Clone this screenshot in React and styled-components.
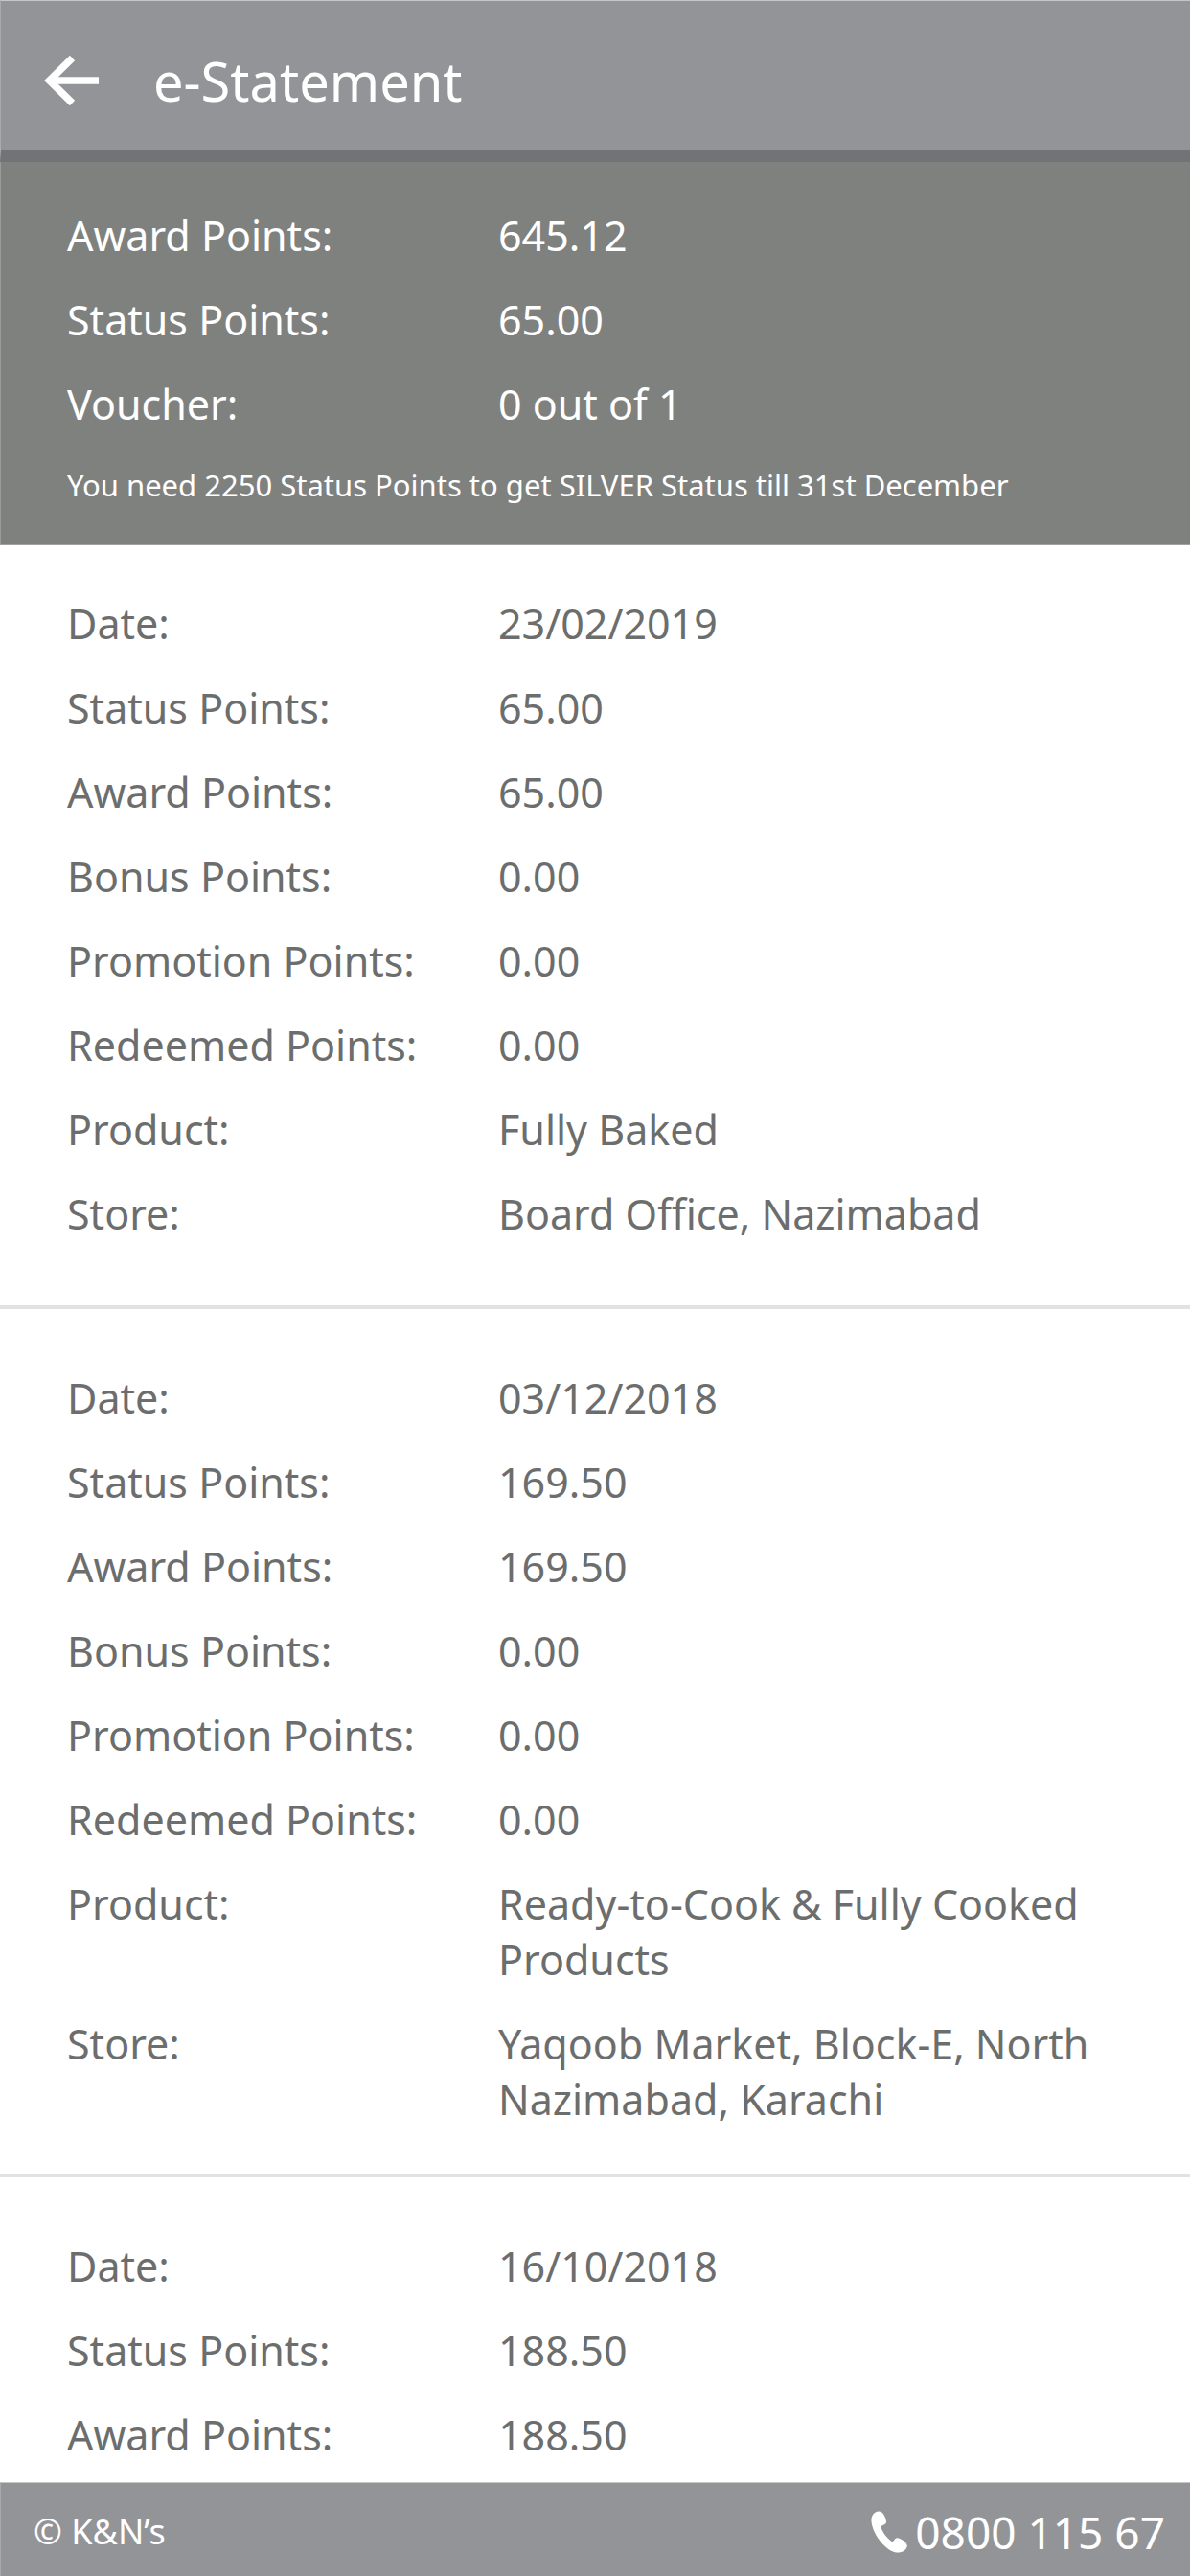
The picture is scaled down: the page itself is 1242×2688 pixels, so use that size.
import styled, { createGlobalStyle } from "styled-components";

const GlobalStyle = createGlobalStyle`
  *, *::before, *::after {
    box-sizing: border-box;
  }

  body {
    margin: 0;
    background-color: #fff;
    font-family: "Noto Sans", "Open Sans", sans-serif;
  }
`;

const Page = styled.div`
  display: flex;
  flex-direction: column;
  min-height: 100vh;
  color: #6c6d6d;
`;

const Header = styled.header`
  display: flex;
  align-items: center;
  gap: 56px;
  height: 169px;
  padding: 10px 45px 0;
  background-color: #939498;
  border-top: 1px solid #c5c6c8;
  border-left: 1px solid #a9aaad;
  border-bottom: 12px solid #727377;
  color: #fff;
`;

const BackButton = styled.button`
  display: flex;
  padding: 0;
  border: none;
  background: none;
  color: inherit;
  cursor: pointer;

  svg {
    width: 58px;
    height: 54px;
  }
`;

const Title = styled.h1`
  margin: 0;
  font-size: 56px;
  line-height: 76px;
  font-weight: 400;
`;

const Summary = styled.section`
  padding: 48px 70px 40px 69px;
  background-color: #7f817f;
  border-left: 1px solid #999a99;
  border-bottom: 1px solid #a0a1a0;
  color: #fff;
`;

const Notice = styled.p`
  margin: 33px 0 0;
  font-size: 31px;
  line-height: 44px;
`;

const Details = styled.dl`
  display: flex;
  flex-direction: column;
  gap: 30px;
  margin: 0;
  font-size: 43px;
  line-height: 58px;
`;

const DetailRow = styled.div`
  display: grid;
  grid-template-columns: 450px 1fr;

  dt,
  dd {
    margin: 0;
  }
`;

const Statements = styled.main`
  flex: 1;
`;

const Entry = styled.article`
  padding: 64px 70px ${props => (props.$compact ? "48px" : "66px")};
  border-bottom: 4px solid #e1e3e2;

  &:first-child {
    padding-top: 53px;
  }

  &:last-child {
    padding-bottom: 0;
    border-bottom: none;
  }
`;

const Footer = styled.footer`
  display: flex;
  align-items: center;
  justify-content: space-between;
  height: 98px;
  padding: 4px 26px 0 34px;
  background-color: #939498;
  border-top: 1px solid #c5c6c8;
  border-left: 1px solid #a9aaad;
  color: #fff;
`;

const Copyright = styled.span`
  font-size: 36px;
  line-height: 52px;
`;

const PhoneLink = styled.a`
  display: flex;
  align-items: center;
  gap: 8px;
  color: inherit;
  font-size: 46px;
  line-height: 60px;
  text-decoration: none;

  svg {
    width: 38px;
    height: 44px;
  }
`;

const summary = [
  ["Award Points:", "645.12"],
  ["Status Points:", "65.00"],
  ["Voucher:", "0 out of 1"],
];

const statements = [
  {
    rows: [
      ["Date:", "23/02/2019"],
      ["Status Points:", "65.00"],
      ["Award Points:", "65.00"],
      ["Bonus Points:", "0.00"],
      ["Promotion Points:", "0.00"],
      ["Redeemed Points:", "0.00"],
      ["Product:", "Fully Baked"],
      ["Store:", "Board Office, Nazimabad"],
    ],
  },
  {
    compact: true,
    rows: [
      ["Date:", "03/12/2018"],
      ["Status Points:", "169.50"],
      ["Award Points:", "169.50"],
      ["Bonus Points:", "0.00"],
      ["Promotion Points:", "0.00"],
      ["Redeemed Points:", "0.00"],
      ["Product:", "Ready-to-Cook & Fully Cooked Products"],
      ["Store:", "Yaqoob Market, Block-E, North Nazimabad, Karachi"],
    ],
  },
  {
    rows: [
      ["Date:", "16/10/2018"],
      ["Status Points:", "188.50"],
      ["Award Points:", "188.50"],
    ],
  },
];

function DetailList({ rows }) {
  return (
    <Details>
      {rows.map(([label, value]) => (
        <DetailRow key={label}>
          <dt>{label}</dt>
          <dd>{value}</dd>
        </DetailRow>
      ))}
    </Details>
  );
}

export default function App() {
  return (
    <Page>
      <GlobalStyle />
      <Header>
        <BackButton type="button" aria-label="Back">
          <svg viewBox="0 0 58 54" fill="none" stroke="currentColor" strokeWidth="7.5">
            <path d="M57 27H6" />
            <path d="M29.5 3.5L5.5 27L29.5 50.5" />
          </svg>
        </BackButton>
        <Title>e-Statement</Title>
      </Header>

      <Summary>
        <DetailList rows={summary} />
        <Notice>You need 2250 Status Points to get SILVER Status till 31st December</Notice>
      </Summary>

      <Statements>
        {statements.map(({ rows, compact }) => (
          <Entry key={rows[0][1]} $compact={compact}>
            <DetailList rows={rows} />
          </Entry>
        ))}
      </Statements>

      <Footer>
        <Copyright>© K&N’s</Copyright>
        <PhoneLink href="tel:080011567">
          <svg viewBox="0 0 38 44" fill="currentColor">
            <path d="M8 0.5C11 0.2 13 2.5 14.5 6C16 9.5 17 12.5 14.5 14C12 15.5 10 15.5 10.5 17.5C12 22 16.5 28 21 31.5C23 33 23.5 31.5 25 29.5C27 27 30 28.5 33 30.5C36.5 33 38.5 35 37.5 38C36 42 31 44 26 43.5C20 42.5 12 35.5 7 28C2.5 21 0 13.5 0.5 8.5C1 4 4 1 8 0.5Z" />
          </svg>
          0800 115 67
        </PhoneLink>
      </Footer>
    </Page>
  );
}
